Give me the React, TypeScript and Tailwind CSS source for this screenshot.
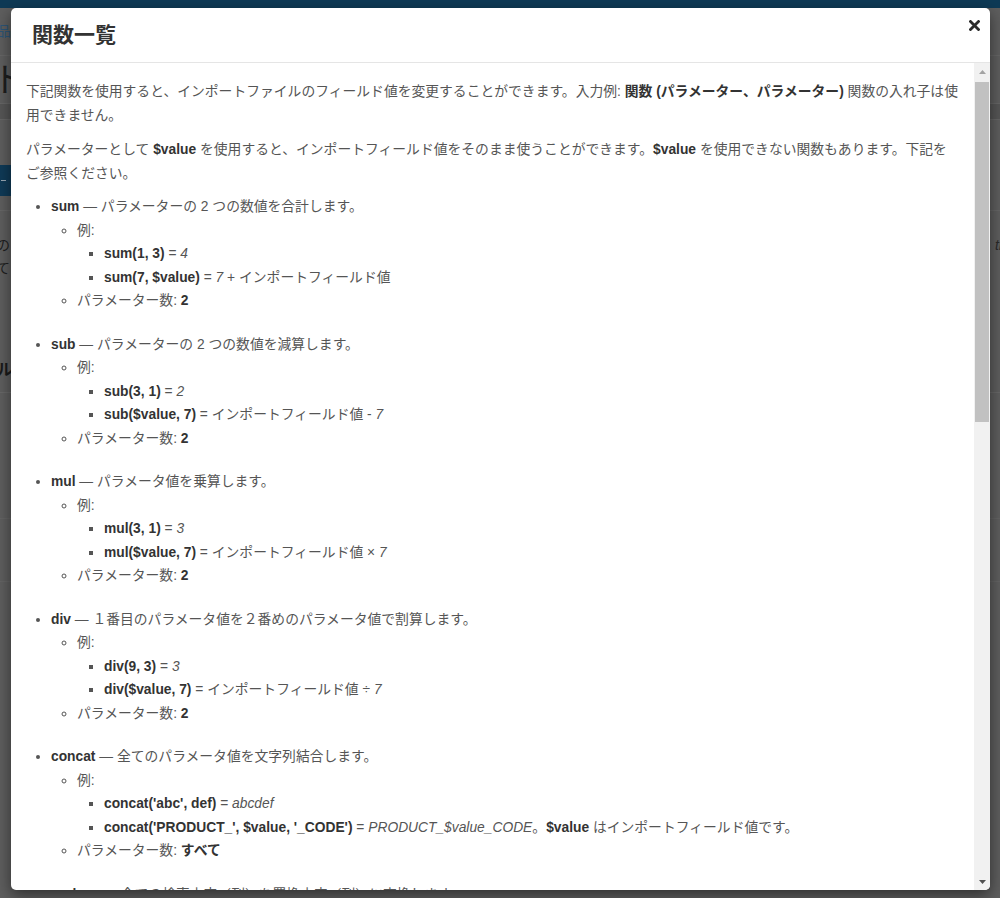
import React from "react";

const B = ({ children }: { children: React.ReactNode }) => (
  <b className="font-bold text-[#333]">{children}</b>
);
const I = ({ children }: { children: React.ReactNode }) => <i className="italic">{children}</i>;

type Fn = {
  name: string;
  desc: string;
  ex: React.ReactNode[];
  count: React.ReactNode;
};

const fns: Fn[] = [
  {
    name: "sum",
    desc: " — パラメーターの 2 つの数値を合計します。",
    ex: [
      <>
        <B>sum(1, 3)</B> = <I>4</I>
      </>,
      <>
        <B>sum(7, $value)</B> = <I>7</I> + インポートフィールド値
      </>,
    ],
    count: "2",
  },
  {
    name: "sub",
    desc: " — パラメーターの 2 つの数値を減算します。",
    ex: [
      <>
        <B>sub(3, 1)</B> = <I>2</I>
      </>,
      <>
        <B>sub($value, 7)</B> = インポートフィールド値 - <I>7</I>
      </>,
    ],
    count: "2",
  },
  {
    name: "mul",
    desc: " — パラメータ値を乗算します。",
    ex: [
      <>
        <B>mul(3, 1)</B> = <I>3</I>
      </>,
      <>
        <B>mul($value, 7)</B> = インポートフィールド値 × <I>7</I>
      </>,
    ],
    count: "2",
  },
  {
    name: "div",
    desc: " — １番目のパラメータ値を２番めのパラメータ値で割算します。",
    ex: [
      <>
        <B>div(9, 3)</B> = <I>3</I>
      </>,
      <>
        <B>div($value, 7)</B> = インポートフィールド値 ÷ <I>7</I>
      </>,
    ],
    count: "2",
  },
  {
    name: "concat",
    desc: " — 全てのパラメータ値を文字列結合します。",
    ex: [
      <>
        <B>concat('abc', def)</B> = <I>abcdef</I>
      </>,
      <>
        <B>concat('PRODUCT_', $value, '_CODE')</B> = <I>PRODUCT_$value_CODE</I>。<B>$value</B>{" "}
        はインポートフィールド値です。
      </>,
    ],
    count: "すべて",
  },
  {
    name: "replace",
    desc: " — 全ての検索文字（列）を置換文字（列）に変換します。",
    ex: [
      <>
        <B>replace('abc', 'b', 'x')</B> = <I>axc</I>
      </>,
    ],
    count: "3",
  },
];

export default function App() {
  return (
    <div className="relative w-[1000px] h-[898px] overflow-hidden bg-[#5e5e5e] font-['Liberation_Sans','Noto_Sans_CJK_JP',sans-serif]">
      {/* dimmed page behind */}
      <div className="h-[8px] bg-[#0e3a56]" />
      <div className="h-[47px] flex items-center justify-between text-[14px] text-[#2c5577]">
        <span className="-ml-[3px]">品</span>
        <span />
      </div>
      <div className="h-px bg-[#666]" />
      <div className="h-[47px] flex items-center text-[34px] leading-none text-[#1e1e1e]">
        <span className="-ml-[8px]">ト</span>
      </div>
      <div className="h-[17px] bg-[#565656] border-y border-[#666]" />
      <div className="h-[45px]" />
      <div className="h-[31px] w-[40px] bg-[#0f3a57] flex items-center">
        <span className="ml-[1px] w-[5px] h-px bg-[#9aa9b5]" />
      </div>
      <div className="h-[14px]" />
      <div className="h-px bg-[#666]" />
      <div className="pt-[23px] flex justify-between text-[14px] leading-[23px] text-[#1e1e1e]">
        <div className="-ml-[4px]">
          の<br />て
        </div>
        <div className="italic text-[#2a2a2a] -mr-[2px]">ti</div>
      </div>
      <div className="h-[78px]" />
      <div className="flex text-[16px] font-bold text-[#1a1a1a] leading-[24px]">
        <span className="-ml-[3px]">ル</span>
      </div>
      <div className="mt-[10px] h-px bg-[#686868]" />
      <div className="mt-[125px] h-px bg-[#646464]" />
      <div className="mt-[62px] h-px bg-[#646464]" />

      {/* modal */}
      <div className="absolute left-[11px] top-[8px] w-[979px] h-[882px] bg-white rounded-[5px] shadow-[0_5px_15px_rgba(0,0,0,0.5)] flex flex-col overflow-hidden">
        <div className="h-[55px] shrink-0 flex justify-between border-b border-[#e5e5e5] pl-[21px] pr-[10px]">
          <h4 className="text-[21px] font-bold text-[#333] leading-none mt-[16px]">関数一覧</h4>
          <button className="mt-[11px] w-[12px] h-[12px] flex items-center justify-center">
            <svg width="11" height="11" viewBox="0 0 11 11">
              <path d="M1.5 1.5 L9.5 9.5 M9.5 1.5 L1.5 9.5" stroke="#2b2b2b" strokeWidth="2.8" strokeLinecap="square" />
            </svg>
          </button>
        </div>
        <div className="flex-1 min-h-0 flex">
          <div className="flex-1 min-w-0 overflow-hidden pl-[15px] pt-[17px] text-[13.8px] leading-[23.5px] text-[#555] whitespace-nowrap">
            <p className="mb-[11px]">
              下記関数を使用すると、インポートファイルのフィールド値を変更することができます。入力例:{" "}
              <B>関数 (パラメーター、パラメーター)</B> 関数の入れ子は使
              <br />
              用できません。
            </p>
            <p className="mb-[10px]">
              パラメーターとして <B>$value</B>{" "}
              を使用すると、インポートフィールド値をそのまま使うことができます。<B>$value</B>{" "}
              を使用できない関数もあります。下記を
              <br />
              ご参照ください。
            </p>
            <ul className="list-disc pl-[25px]">
              {fns.map((f) => (
                <li key={f.name} className="mb-[20px]">
                  <B>{f.name}</B>
                  {f.desc}
                  <ul className="list-[circle] pl-[26px]">
                    <li>
                      例:
                      <ul className="list-[square] pl-[27px]">
                        {f.ex.map((e, i) => (
                          <li key={i}>{e}</li>
                        ))}
                      </ul>
                    </li>
                    <li>
                      パラメーター数: <B>{f.count}</B>
                    </li>
                  </ul>
                </li>
              ))}
            </ul>
          </div>
          <div className="w-[16px] shrink-0 bg-[#f1f1f1] flex flex-col">
            <div className="h-[17px] flex items-center justify-center">
              <svg width="7" height="4" viewBox="0 0 7 4">
                <path d="M0 4 L3.5 0 L7 4 Z" fill="#a3a3a3" />
              </svg>
            </div>
            <div className="h-[340px] mt-[2px] mx-[1px] bg-[#c1c1c1]" />
            <div className="flex-1" />
            <div className="h-[17px] flex items-center justify-center">
              <svg width="7" height="4" viewBox="0 0 7 4">
                <path d="M0 0 L3.5 4 L7 0 Z" fill="#505050" />
              </svg>
            </div>
          </div>
        </div>
      </div>
    </div>
  );
}
